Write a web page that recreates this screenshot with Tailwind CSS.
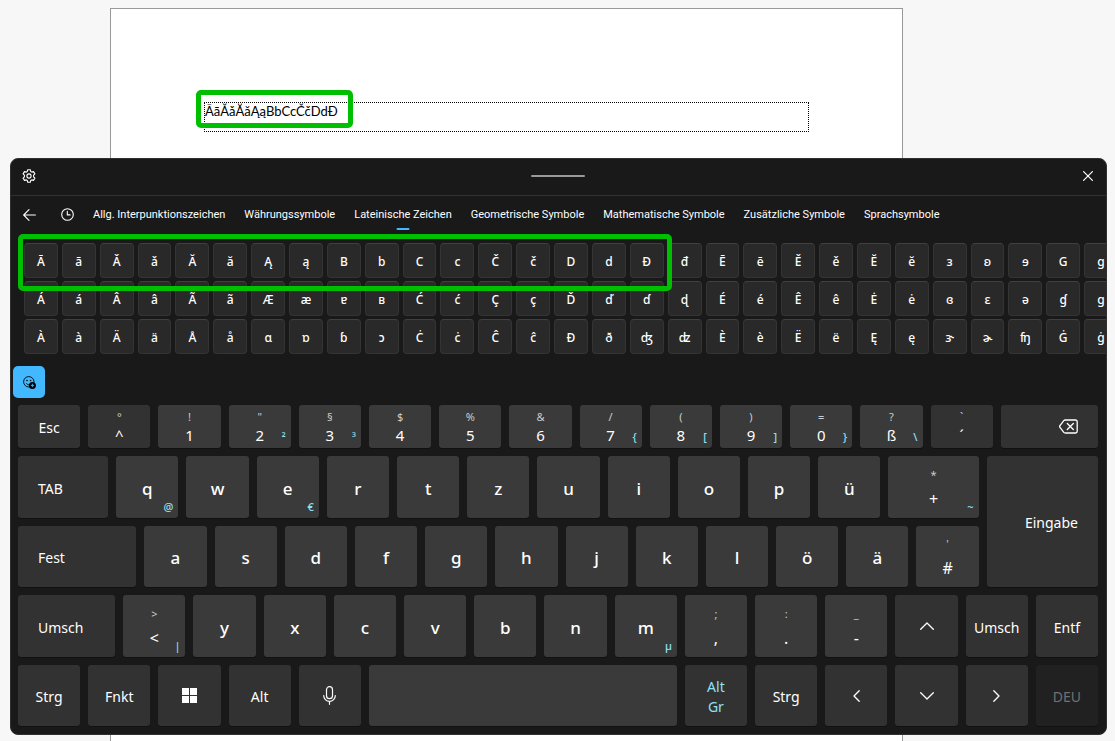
<!DOCTYPE html>
<html lang="de">
<head>
  <meta charset="utf-8">
  <meta name="viewport" content="width=device-width, initial-scale=1">
  <title>Bildschirmtastatur</title>
  <script src="https://cdn.jsdelivr.net/npm/@tailwindcss/browser@4"></script>
</head>
<body class="relative h-screen min-h-[741px] overflow-hidden bg-[#f7f7f7] font-['Noto_Sans','Open_Sans',sans-serif]">

  <!-- document -->
  <main class="h-full pt-2 pl-[110px] pr-[212px]">
    <div class="h-full border border-b-0 border-[#999] bg-white px-[93px] pt-[93px]">
      <div class="relative">
        <textarea aria-label="Text" spellcheck="false" class="block h-[30px] w-full resize-none overflow-hidden border border-dotted border-black bg-white font-['Lato','Noto_Sans',sans-serif] text-[13px] leading-4 text-black outline-none">ĀāǍǎĂăĄąBbCcČčDdĐ</textarea>
        <div class="pointer-events-none absolute -top-3 -left-2 h-[38px] w-[157px] rounded-[5px] border-5 border-[#00be00]"></div>
      </div>
    </div>
  </main>

  <!-- keyboard window -->
  <section aria-label="Tastatur" class="absolute top-[158px] right-2 left-[10px] overflow-hidden rounded-lg border border-[#303030] bg-[#191919] text-white">
    <header class="grid h-9 grid-cols-3 items-center px-[11px] pb-0.5">
      <button aria-label="Einstellungen" class="justify-self-start">
        <svg class="size-[14px]" viewBox="0 0 14 14" fill="none" stroke="currentColor" stroke-width="1.1" stroke-linejoin="round">
          <path d="M5.700.7h2.600l.4 1.800 1.100.6 1.700-.5 1.400 2.300-1.300 1.200v1.800l1.300 1.200-1.400 2.300-1.700-.5-1.100.6-.4 1.800H5.700l-.4-1.800-1.100-.6-1.700.5-1.400-2.300 1.300-1.200V6.100L1.100 4.900l1.400-2.300 1.700.5 1.100-.6z"/>
          <circle cx="7" cy="7" r="2.100"/>
        </svg>
      </button>
      <div class="h-0.5 w-[54px] justify-self-center rounded-full bg-[#999]"></div>
      <button aria-label="Schließen" class="mr-0.5 justify-self-end">
        <svg class="size-[10px]" viewBox="0 0 10 10" fill="none" stroke="currentColor" stroke-width="1.2" stroke-linecap="round"><path d="M.6.6l8.800 8.800M9.400.6L.6 9.400"/></svg>
      </button>
    </header>

    <nav class="flex h-10 items-center border-t border-[#303030] pl-3 font-['Roboto','Noto_Sans',sans-serif] text-[11px] whitespace-nowrap">
      <button aria-label="Zurück" class="mr-[25px] pb-0.5">
        <svg class="h-3 w-[13px]" viewBox="0 0 13 12" fill="none" stroke="currentColor" stroke-width="1.1" stroke-linecap="round" stroke-linejoin="round"><path d="M12.400 6H.7M6 .7L.7 6 6 11.300"/></svg>
      </button>
      <button aria-label="Zuletzt verwendet" class="mr-[19px] pb-0.5">
        <svg class="size-[13px]" viewBox="0 0 13 13" fill="none" stroke="currentColor" stroke-width="1.1" stroke-linecap="round" stroke-linejoin="round"><circle cx="6.500" cy="6.500" r="5.800"/><path d="M6.300 3.200v3.700h2.800"/></svg>
      </button>
      <div role="tablist" class="flex h-full gap-[19px]">
        <button role="tab">Allg. Interpunktionszeichen</button>
        <button role="tab">Währungssymbole</button>
        <button role="tab" aria-selected="true" class="relative">Lateinische Zeichen
          <span class="absolute bottom-[5px] left-1/2 h-0.5 w-[13px] -translate-x-1/2 rounded-full bg-[#42b8ff]"></span>
        </button>
        <button role="tab">Geometrische Symbole</button>
        <button role="tab">Mathematische Symbole</button>
        <button role="tab">Zusätzliche Symbole</button>
        <button role="tab">Sprachsymbole</button>
      </div>
    </nav>

    <!-- symbols, last column runs off the edge -->
    <div class="relative pt-2">
      <div class="-mr-3 ml-[13px] grid grid-cols-29 gap-x-1 gap-y-[3px] text-xs font-medium [&>button]:h-[35px] [&>button]:rounded [&>button]:border [&>button]:border-[#343434] [&>button]:border-t-[#404040] [&>button]:bg-[#292929] [&>button]:pt-0.5">
        <button>Ā</button><button>ā</button><button>Ǎ</button><button>ǎ</button><button>Ă</button><button>ă</button><button>Ą</button><button>ą</button><button>B</button><button>b</button>
        <button>C</button><button>c</button><button>Č</button><button>č</button><button>D</button><button>d</button><button>Đ</button><button>đ</button><button>Ē</button><button>ē</button>
        <button>Ě</button><button>ě</button><button>Ĕ</button><button>ĕ</button><button>ɜ</button><button>ʚ</button><button>ɘ</button><button>G</button><button>g</button>

        <button>Á</button><button>á</button><button>Â</button><button>â</button><button>Ã</button><button>ã</button><button>Æ</button><button>æ</button><button>ɐ</button><button>ʙ</button>
        <button>Ć</button><button>ć</button><button>Ç</button><button>ç</button><button>Ď</button><button>ď</button><button>ɗ</button><button>ɖ</button><button>É</button><button>é</button>
        <button>Ê</button><button>ê</button><button>Ė</button><button>ė</button><button>ɞ</button><button>ɛ</button><button>ə</button><button>ɠ</button><button>ɡ</button>

        <button>À</button><button>à</button><button>Ä</button><button>ä</button><button>Å</button><button>å</button><button>ɑ</button><button>ɒ</button><button>ɓ</button><button>ɔ</button>
        <button>Ċ</button><button>ċ</button><button>Ĉ</button><button>ĉ</button><button>Ð</button><button>ð</button><button>ʤ</button><button>ʣ</button><button>È</button><button>è</button>
        <button>Ë</button><button>ë</button><button>Ę</button><button>ę</button><button>ɝ</button><button>ɚ</button><button>ʩ</button><button>Ġ</button><button>ġ</button>
      </div>
      <div class="pointer-events-none absolute -top-px left-[7px] h-[57px] w-[654px] rounded-[5px] border-5 border-[#00be00]"></div>
    </div>

    <button aria-label="Emoji und mehr" class="mt-3 ml-0.5 flex size-8 items-center justify-center rounded-[5px] bg-[#42b8ff] text-black">
      <svg class="size-[13px]" viewBox="0 0 13 13" fill="none" stroke="currentColor">
        <circle cx="5.800" cy="5.800" r="5.200" stroke-width=".9"/>
        <path d="M3.300 7.300c.8 1.100 1.700 1.500 2.800 1.500" stroke-width=".9"/>
        <circle cx="4" cy="4.500" r=".8" fill="currentColor" stroke="none"/>
        <circle cx="7.600" cy="4.500" r=".8" fill="currentColor" stroke="none"/>
        <circle cx="9.400" cy="9.400" r="3.500" fill="currentColor" stroke="none"/>
        <path d="M9.400 7.700v3.400M7.700 9.400h3.400" stroke="#42b8ff" stroke-width=".9"/>
      </svg>
    </button>

    <!-- keys: 155 tracks, one normal key = 10 -->
    <div class="mt-[7px] mr-1 mb-2 ml-[3px] grid grid-cols-155 grid-rows-[43px_62px_61px_62px_61px] gap-y-2 text-sm [&_i]:absolute [&_i]:right-[5px] [&_i]:bottom-[5px] [&_i]:text-[11px] [&_i]:leading-3 [&_i]:font-medium [&_i]:text-[#8de1f5] [&_i]:not-italic [&_small]:text-[11px] [&_small]:leading-3 [&_small]:text-[#ccc] [&>button]:relative [&>button]:mx-1 [&>button]:flex [&>button]:items-center [&>button]:justify-center [&>button]:rounded-[3px] [&>button]:shadow-[0_1px_0_#111]">
      <button class="col-span-10 bg-[#323232] pt-0.5">Esc</button>
      <button class="col-span-10 flex-col gap-0.5 bg-[#323232] pt-0.5 text-[15px] leading-5"><small>°</small><span>^</span></button>
      <button class="col-span-10 flex-col gap-0.5 bg-[#3a3a3a] pt-0.5 text-[15px] leading-5"><small>!</small><span>1</span></button>
      <button class="col-span-10 flex-col gap-0.5 bg-[#3a3a3a] pt-0.5 text-[15px] leading-5"><small>"</small><span>2</span><i>²</i></button>
      <button class="col-span-10 flex-col gap-0.5 bg-[#3a3a3a] pt-0.5 text-[15px] leading-5"><small>§</small><span>3</span><i>³</i></button>
      <button class="col-span-10 flex-col gap-0.5 bg-[#3a3a3a] pt-0.5 text-[15px] leading-5"><small>$</small><span>4</span></button>
      <button class="col-span-10 flex-col gap-0.5 bg-[#3a3a3a] pt-0.5 text-[15px] leading-5"><small>%</small><span>5</span></button>
      <button class="col-span-10 flex-col gap-0.5 bg-[#3a3a3a] pt-0.5 text-[15px] leading-5"><small>&amp;</small><span>6</span></button>
      <button class="col-span-10 flex-col gap-0.5 bg-[#3a3a3a] pt-0.5 text-[15px] leading-5"><small>/</small><span>7</span><i>{</i></button>
      <button class="col-span-10 flex-col gap-0.5 bg-[#3a3a3a] pt-0.5 text-[15px] leading-5"><small>(</small><span>8</span><i>[</i></button>
      <button class="col-span-10 flex-col gap-0.5 bg-[#3a3a3a] pt-0.5 text-[15px] leading-5"><small>)</small><span>9</span><i>]</i></button>
      <button class="col-span-10 flex-col gap-0.5 bg-[#3a3a3a] pt-0.5 text-[15px] leading-5"><small>=</small><span>0</span><i>}</i></button>
      <button class="col-span-10 flex-col gap-0.5 bg-[#3a3a3a] pt-0.5 text-[15px] leading-5"><small>?</small><span>ß</span><i>\</i></button>
      <button class="col-span-10 flex-col gap-0.5 bg-[#323232] pt-0.5 text-[15px] leading-5"><small>`</small><span>´</span></button>
      <button aria-label="Rücktaste" class="col-span-15 bg-[#323232] pr-5"><svg class="ml-auto h-[15px] w-[19px]" viewBox="0 0 19 15" fill="none" stroke="currentColor" stroke-width="1.300" stroke-linecap="round" stroke-linejoin="round"><path d="M6.200 1h10.300a1.700 1.700 0 0 1 1.700 1.700v9.600a1.700 1.700 0 0 1-1.700 1.700H6.200a2 2 0 0 1-1.400-.6L1.200 8.700a1.700 1.700 0 0 1 0-2.400l3.600-4.700A2 2 0 0 1 6.200 1zM8.300 4.500l6 6M14.300 4.500l-6 6"/></svg></button>

      <button class="col-span-14 bg-[#323232] pt-1 pl-5"><span class="mr-auto">TAB</span></button>
      <button class="col-span-10 bg-[#3a3a3a] pt-1 text-[17px] font-medium">q<i>@</i></button>
      <button class="col-span-10 bg-[#3a3a3a] pt-1 text-[17px] font-medium">w</button>
      <button class="col-span-10 bg-[#3a3a3a] pt-1 text-[17px] font-medium">e<i>€</i></button>
      <button class="col-span-10 bg-[#3a3a3a] pt-1 text-[17px] font-medium">r</button>
      <button class="col-span-10 bg-[#3a3a3a] pt-1 text-[17px] font-medium">t</button>
      <button class="col-span-10 bg-[#3a3a3a] pt-1 text-[17px] font-medium">z</button>
      <button class="col-span-10 bg-[#3a3a3a] pt-1 text-[17px] font-medium">u</button>
      <button class="col-span-10 bg-[#3a3a3a] pt-1 text-[17px] font-medium">i</button>
      <button class="col-span-10 bg-[#3a3a3a] pt-1 text-[17px] font-medium">o</button>
      <button class="col-span-10 bg-[#3a3a3a] pt-1 text-[17px] font-medium">p</button>
      <button class="col-span-10 bg-[#3a3a3a] pt-1 text-[17px] font-medium">ü</button>
      <button class="col-span-14 flex-col gap-1.5 bg-[#3a3a3a] pt-1.5 text-base"><small>*</small><span>+</span><i>~</i></button>
      <button class="col-span-17 row-span-2 bg-[#323232] pt-0.5 pr-5"><span class="ml-auto">Eingabe</span></button>

      <button class="col-span-18 bg-[#323232] pt-0.5 pl-5"><span class="mr-auto">Fest</span></button>
      <button class="col-span-10 bg-[#3a3a3a] pt-1 text-[17px] font-medium">a</button>
      <button class="col-span-10 bg-[#3a3a3a] pt-1 text-[17px] font-medium">s</button>
      <button class="col-span-10 bg-[#3a3a3a] pt-1 text-[17px] font-medium">d</button>
      <button class="col-span-10 bg-[#3a3a3a] pt-1 text-[17px] font-medium">f</button>
      <button class="col-span-10 bg-[#3a3a3a] pt-1 text-[17px] font-medium">g</button>
      <button class="col-span-10 bg-[#3a3a3a] pt-1 text-[17px] font-medium">h</button>
      <button class="col-span-10 bg-[#3a3a3a] pt-1 text-[17px] font-medium">j</button>
      <button class="col-span-10 bg-[#3a3a3a] pt-1 text-[17px] font-medium">k</button>
      <button class="col-span-10 bg-[#3a3a3a] pt-1 text-[17px] font-medium">l</button>
      <button class="col-span-10 bg-[#3a3a3a] pt-1 text-[17px] font-medium">ö</button>
      <button class="col-span-10 bg-[#3a3a3a] pt-1 text-[17px] font-medium">ä</button>
      <button class="col-span-10 flex-col gap-1.5 bg-[#3a3a3a] pt-1 text-base"><small>'</small><span>#</span></button>

      <button class="col-span-15 bg-[#323232] pt-1 pl-5"><span class="mr-auto">Umsch</span></button>
      <button class="col-span-10 flex-col gap-1.5 bg-[#3a3a3a] pt-1.5 text-base"><small>&gt;</small><span>&lt;</span><i>|</i></button>
      <button class="col-span-10 bg-[#3a3a3a] pt-1 text-[17px] font-medium">y</button>
      <button class="col-span-10 bg-[#3a3a3a] pt-1 text-[17px] font-medium">x</button>
      <button class="col-span-10 bg-[#3a3a3a] pt-1 text-[17px] font-medium">c</button>
      <button class="col-span-10 bg-[#3a3a3a] pt-1 text-[17px] font-medium">v</button>
      <button class="col-span-10 bg-[#3a3a3a] pt-1 text-[17px] font-medium">b</button>
      <button class="col-span-10 bg-[#3a3a3a] pt-1 text-[17px] font-medium">n</button>
      <button class="col-span-10 bg-[#3a3a3a] pt-1 text-[17px] font-medium">m<i>µ</i></button>
      <button class="col-span-10 flex-col gap-1.5 bg-[#3a3a3a] pt-1.5 text-base"><small>;</small><span>,</span></button>
      <button class="col-span-10 flex-col gap-1.5 bg-[#3a3a3a] pt-1.5 text-base"><small>:</small><span>.</span></button>
      <button class="col-span-10 flex-col gap-1.5 bg-[#3a3a3a] pt-1.5 text-base"><small>_</small><span>-</span></button>
      <button aria-label="Nach oben" class="col-span-10 bg-[#323232]"><svg class="h-2 w-[14px]" viewBox="0 0 14 8" fill="none" stroke="currentColor" stroke-width="1.300" stroke-linecap="round" stroke-linejoin="round"><path d="M.7 7.300L7 1l6.300 6.300"/></svg></button>
      <button class="col-span-10 bg-[#323232] pt-1">Umsch</button>
      <button class="col-span-10 bg-[#323232] pt-1">Entf</button>

      <button class="col-span-10 bg-[#323232] pt-0.5">Strg</button>
      <button class="col-span-10 bg-[#323232] pt-0.5">Fnkt</button>
      <button aria-label="Windows" class="col-span-10 bg-[#323232]"><svg class="size-[15px]" viewBox="0 0 15 15" fill="currentColor"><path d="M0 0h7v7H0zM8 0h7v7H8zM0 8h7v7H0zM8 8h7v7H8z"/></svg></button>
      <button class="col-span-10 bg-[#323232] pt-0.5">Alt</button>
      <button aria-label="Spracheingabe" class="col-span-10 bg-[#323232]"><svg class="h-[19px] w-[13px]" viewBox="0 0 13 19" fill="none" stroke="currentColor" stroke-width="1.200" stroke-linecap="round"><rect x="3.500" y=".7" width="6" height="12" rx="3"/><path d="M.7 9.500a5.800 5.800 0 0 0 11.600 0M6.500 15.500v2.800"/></svg></button>
      <button aria-label="Leertaste" class="col-span-45 bg-[#3a3a3a]"></button>
      <button class="col-span-10 bg-[#323232] pt-0.5 leading-5 text-[#8de1f5]">Alt<br>Gr</button>
      <button class="col-span-10 bg-[#323232] pt-0.5">Strg</button>
      <button aria-label="Nach links" class="col-span-10 bg-[#323232]"><svg class="h-3 w-[7px]" viewBox="0 0 7 12" fill="none" stroke="currentColor" stroke-width="1.300" stroke-linecap="round" stroke-linejoin="round"><path d="M6.200.7L1 6l5.200 5.300"/></svg></button>
      <button aria-label="Nach unten" class="col-span-10 bg-[#323232]"><svg class="h-2 w-[14px]" viewBox="0 0 14 8" fill="none" stroke="currentColor" stroke-width="1.300" stroke-linecap="round" stroke-linejoin="round"><path d="M.7.7L7 7 13.300.7"/></svg></button>
      <button aria-label="Nach rechts" class="col-span-10 bg-[#323232]"><svg class="h-3 w-[7px]" viewBox="0 0 7 12" fill="none" stroke="currentColor" stroke-width="1.300" stroke-linecap="round" stroke-linejoin="round"><path d="M.8.7L6 6 .8 11.300"/></svg></button>
      <button disabled class="col-span-10 bg-[#212121] pt-0.5 text-[#707070]">DEU</button>
    </div>
  </section>

</body>
</html>
